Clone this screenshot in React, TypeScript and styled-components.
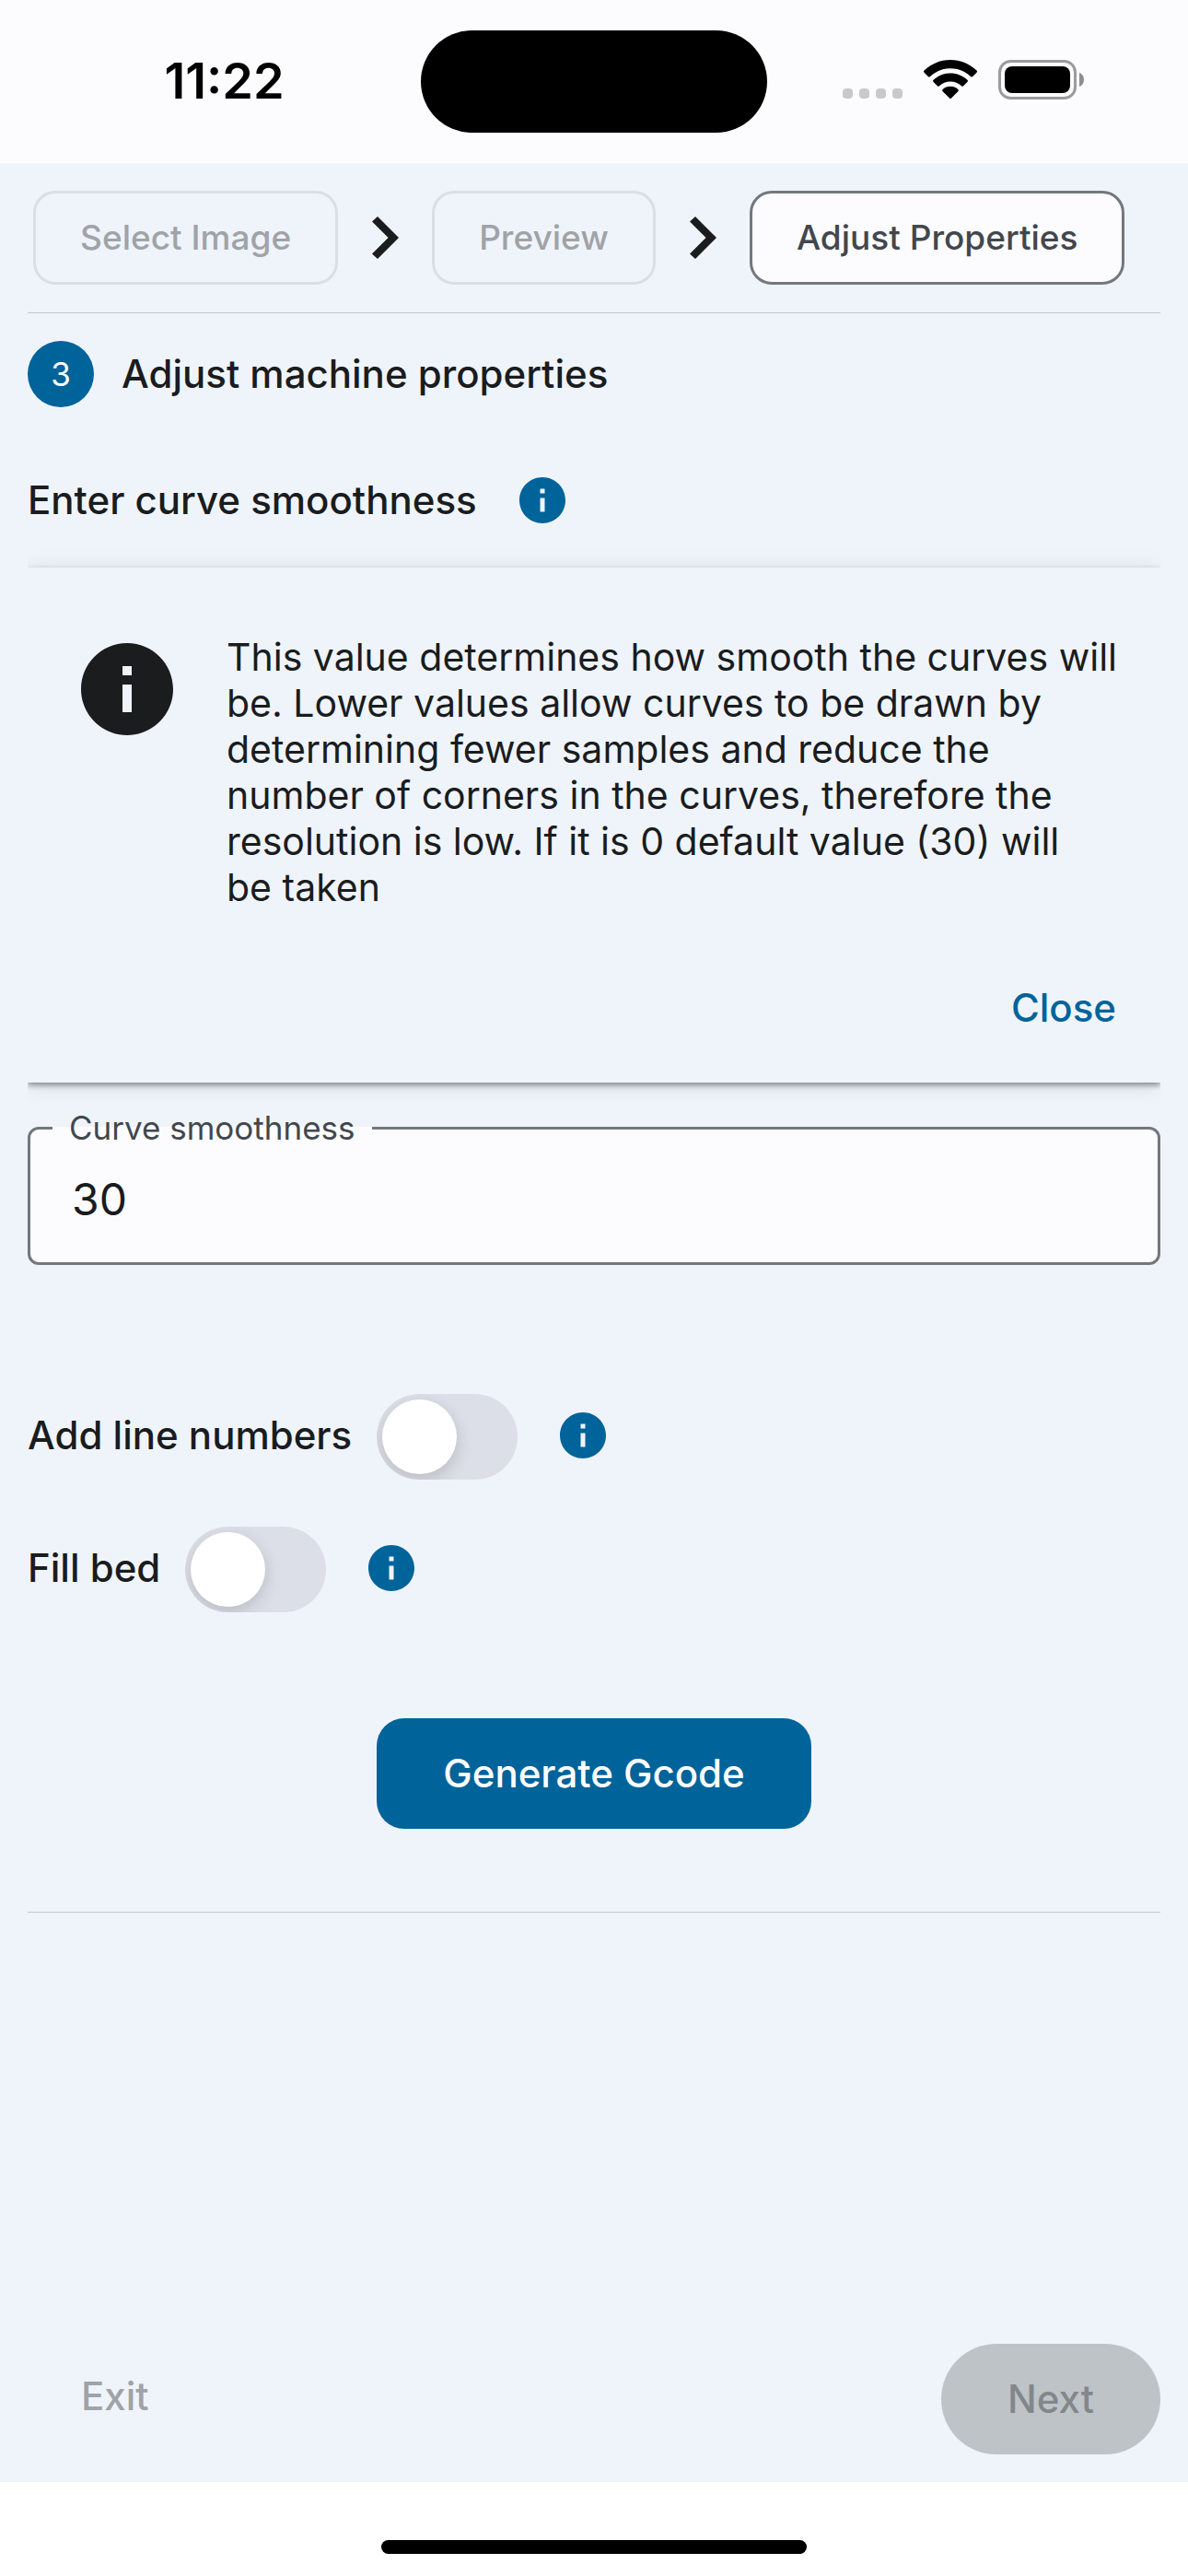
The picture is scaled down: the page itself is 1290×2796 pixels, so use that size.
import React, { useState } from "react";
import styled, { createGlobalStyle } from "styled-components";

const color = {
  surface: "#fcfcff",
  tint: "#eff4fb",
  ink: "#1a1c1e",
  inkSoft: "#42474e",
  outline: "#72787e",
  hairline: "#c2c7ce",
  primary: "#00639a",
  muted: "#a0a3a7",
};

const GlobalStyle = createGlobalStyle`
  *, *::before, *::after { box-sizing: border-box; }
  body { margin: 0; background: #ffffff; }
  button, input { font: inherit; color: inherit; }
`;

const Screen = styled.div`
  display: flex;
  flex-direction: column;
  min-height: 100vh;
  font-family: Inter, "Liberation Sans", sans-serif;
  font-size: 42px;
  line-height: 50px;
  color: ${color.ink};
  background: ${color.tint};
`;

const StatusBar = styled.header`
  display: grid;
  grid-template-columns: 1fr auto 1fr;
  align-items: center;
  justify-items: center;
  padding: 33px 30px;
  background: ${color.surface};
`;

const Clock = styled.time`
  padding-bottom: 2px;
  font-size: 54px;
  font-weight: 600;
  color: #000000;
`;

const Island = styled.div`
  width: 376px;
  height: 111px;
  border-radius: 56px;
  background: #000000;
`;

const StatusIcons = styled.div`
  display: flex;
  align-items: center;
  gap: 23px;
  padding-bottom: 4px;
`;

const Main = styled.main`
  display: flex;
  flex: 1;
  flex-direction: column;
  padding: 0 30px;
`;

const Steps = styled.nav`
  display: flex;
  align-items: center;
  gap: 36px;
  padding: 30px 6px;
  border-bottom: 1px solid ${color.hairline};
`;

const StepButton = styled.button`
  height: 102px;
  padding: 0 48px;
  border: 3px solid ${color.outline};
  border-radius: 24px;
  background: ${color.surface};
  color: ${color.inkSoft};
  font-size: 37px;
  font-weight: 500;
  white-space: nowrap;

  &:disabled {
    border-color: #dadfe5;
    background: transparent;
    color: ${color.muted};
  }
`;

const StepTitle = styled.div`
  display: flex;
  align-items: center;
  gap: 30px;
  padding: 30px 0;
`;

const StepNumber = styled.span`
  display: flex;
  align-items: center;
  justify-content: center;
  width: 72px;
  height: 72px;
  border-radius: 50%;
  background: ${color.primary};
  color: #ffffff;
  font-size: 35px;
`;

const Heading = styled.h1`
  margin: 0;
  font-size: 42px;
  font-weight: 500;
`;

const FieldHeading = styled.div`
  display: flex;
  align-items: center;
  gap: 41px;
  padding: 41px 0 43px;
  font-weight: 500;
`;

const IconButton = styled.button`
  display: flex;
  padding: 0;
  border: 0;
  background: none;
  color: ${color.primary};
`;

const BannerClip = styled.div`
  clip-path: inset(-24px 0);
`;

const Banner = styled.section`
  padding: 72px 40px 24px 48px;
  background: ${color.tint};
  box-shadow: 0 3px 6px rgba(0, 0, 0, 0.4), 0 3px 24px rgba(0, 0, 0, 0.1);
`;

const BannerBody = styled.div`
  display: flex;
  align-items: flex-start;
  gap: 48px;

  svg {
    flex: none;
  }

  p {
    margin: 0;
    font-size: 41px;
  }
`;

const BannerActions = styled.div`
  display: flex;
  justify-content: flex-end;
  padding: 49px 8px 0 0;
`;

const TextButton = styled.button`
  height: 114px;
  padding: 0;
  border: 0;
  background: none;
  color: ${color.primary};
  font-weight: 500;

  &:disabled {
    color: ${color.muted};
  }
`;

const Field = styled.fieldset`
  min-width: 0;
  margin: 28px 0 0;
  padding: 0;
  border: 3px solid ${color.outline};
  border-radius: 12px;
  background: ${color.surface};
`;

const FieldLabel = styled.legend`
  margin-left: 24px;
  padding: 0 18px;
  color: ${color.inkSoft};
  font-size: 35px;
  line-height: 42px;
`;

const FieldInput = styled.input`
  display: block;
  width: 100%;
  height: 125px;
  padding: 0 45px 12px;
  border: 0;
  outline: 0;
  background: none;
  font-size: 48px;
`;

const Switches = styled.div`
  display: flex;
  flex-direction: column;
  gap: 51px;
  padding: 140px 0 115px;
`;

const SwitchRow = styled.div`
  display: flex;
  align-items: center;
  font-weight: 500;

  label,
  button {
    margin-bottom: 3px;
  }

  label {
    margin-right: 27px;
  }

  button {
    margin-left: 41px;
  }
`;

const Switch = styled.input`
  width: 153px;
  height: 93px;
  margin: 0;
  padding: 6px;
  overflow: hidden;
  appearance: none;
  border-radius: 47px;
  background: #dcdfe7;

  &::before {
    content: "";
    display: block;
    width: 81px;
    height: 81px;
    border-radius: 50%;
    background: #ffffff;
    box-shadow: 0 6px 18px rgba(0, 0, 0, 0.16);
  }

  &:checked {
    background: ${color.primary};
  }

  &:checked::before {
    margin-left: 60px;
  }
`;

const Generate = styled.div`
  display: flex;
  justify-content: center;
  padding-bottom: 90px;
  border-bottom: 1px solid ${color.hairline};
`;

const FilledButton = styled.button<{ $radius: number }>`
  height: 120px;
  padding: 0 72px;
  border: 0;
  border-radius: ${(p) => p.$radius}px;
  background: ${color.primary};
  color: #ffffff;
  font-weight: 500;

  &:disabled {
    background: #bec3c7;
    color: #83878b;
  }
`;

const Footer = styled.footer`
  display: flex;
  align-items: flex-start;
  justify-content: space-between;
  margin-top: auto;
  padding: 30px 0 30px 58px;
`;

const HomeArea = styled.div`
  display: flex;
  justify-content: center;
  padding: 63px 0 24px;
  background: #ffffff;
`;

const HomeIndicator = styled.div`
  width: 462px;
  height: 15px;
  border-radius: 8px;
  background: #000000;
`;

const InfoIcon = ({ size }: { size: number }) => (
  <svg width={size} height={size} viewBox="0 0 24 24" fill="currentColor" aria-hidden="true">
    <path d="M12 2C6.480 2 2 6.480 2 12s4.480 10 10 10 10-4.480 10-10S17.520 2 12 2zm1 15h-2v-6h2v6zm0-8h-2V7h2v2z" />
  </svg>
);

const Chevron = () => (
  <svg width="30" height="46" viewBox="0 0 30 46" fill={color.ink} aria-hidden="true">
    <path d="M7 0 30 23 7 46 1 40.600 18.600 23 1 5.400z" />
  </svg>
);

const CellularIcon = () => (
  <svg width="65" height="43" viewBox="0 0 65 43" fill="#c9c9cb" aria-hidden="true">
    {[0, 18, 36, 54].map((x) => (
      <rect key={x} x={x} y="31" width="11" height="11" rx="4" />
    ))}
  </svg>
);

const WifiIcon = () => (
  <svg width="58" height="43" viewBox="0 0 58 43" fill="#000000" aria-hidden="true">
    <path d="M29 0C18 0 8 4.300.5 11.500a1.500 1.500 0 0 0 0 2.200L4.800 18a1.500 1.500 0 0 0 2.200 0C13 12.400 20.600 9.300 29 9.300S45 12.400 51 18a1.500 1.500 0 0 0 2.200 0l4.300-4.300a1.500 1.500 0 0 0 0-2.200C50 4.300 40 0 29 0z" />
    <path d="M29 14.500c-7 0-13.500 2.700-18.400 7.200a1.500 1.500 0 0 0 0 2.200l4.300 4.300a1.500 1.500 0 0 0 2.100 0c3.200-2.900 7.400-4.700 12-4.700s8.800 1.800 12 4.700a1.500 1.500 0 0 0 2.100 0l4.300-4.300a1.500 1.500 0 0 0 0-2.200C42.500 17.200 36 14.500 29 14.500z" />
    <path d="M29 28.800c-3.200 0-6.100 1.200-8.300 3.200a1.500 1.500 0 0 0 0 2.200l7.300 7.300a1.400 1.400 0 0 0 2 0l7.300-7.300a1.500 1.500 0 0 0 0-2.200c-2.200-2-5.100-3.200-8.300-3.200z" />
  </svg>
);

const BatteryIcon = () => (
  <svg width="94" height="43" viewBox="0 0 94 43" aria-hidden="true">
    <rect x="1.500" y="1.500" width="82" height="40" rx="12" fill="none" stroke="#9b9b9d" strokeWidth="3" />
    <rect x="7" y="7" width="71" height="29" rx="8" fill="#000000" />
    <path d="M88 14c3 1 5 4 5 7.500S91 28 88 29z" fill="#8e8e90" />
  </svg>
);

const SwitchField = ({ id, label }: { id: string; label: string }) => {
  const [on, setOn] = useState(false);
  return (
    <SwitchRow>
      <label htmlFor={id}>{label}</label>
      <Switch id={id} type="checkbox" role="switch" checked={on} onChange={() => setOn(!on)} />
      <IconButton type="button" aria-label={`About: ${label}`}>
        <InfoIcon size={60} />
      </IconButton>
    </SwitchRow>
  );
};

export default function App() {
  const [smoothness, setSmoothness] = useState("30");
  const [showInfo, setShowInfo] = useState(true);

  return (
    <Screen>
      <GlobalStyle />
      <StatusBar>
        <Clock>11:22</Clock>
        <Island />
        <StatusIcons>
          <CellularIcon />
          <WifiIcon />
          <BatteryIcon />
        </StatusIcons>
      </StatusBar>

      <Main>
        <Steps aria-label="Steps">
          <StepButton type="button" disabled>Select Image</StepButton>
          <Chevron />
          <StepButton type="button" disabled>Preview</StepButton>
          <Chevron />
          <StepButton type="button" aria-current="step">Adjust Properties</StepButton>
        </Steps>

        <StepTitle>
          <StepNumber>3</StepNumber>
          <Heading>Adjust machine properties</Heading>
        </StepTitle>

        <FieldHeading>
          <span>Enter curve smoothness</span>
          <IconButton type="button" aria-label="About: Curve smoothness" onClick={() => setShowInfo(true)}>
            <InfoIcon size={60} />
          </IconButton>
        </FieldHeading>

        {showInfo && (
          <BannerClip>
            <Banner>
              <BannerBody>
                <InfoIcon size={120} />
                <p>
                  This value determines how smooth the curves will be. Lower values allow curves to be drawn by
                  determining fewer samples and reduce the number of corners in the curves, therefore the
                  resolution is low. If it is 0 default value (30) will
                  <br />
                  be taken
                </p>
              </BannerBody>
              <BannerActions>
                <TextButton type="button" onClick={() => setShowInfo(false)}>Close</TextButton>
              </BannerActions>
            </Banner>
          </BannerClip>
        )}

        <Field>
          <FieldLabel>
            <label htmlFor="smoothness">Curve smoothness</label>
          </FieldLabel>
          <FieldInput
            id="smoothness"
            inputMode="numeric"
            value={smoothness}
            onChange={(e) => setSmoothness(e.target.value)}
          />
        </Field>

        <Switches>
          <SwitchField id="line-numbers" label="Add line numbers" />
          <SwitchField id="fill-bed" label="Fill bed" />
        </Switches>

        <Generate>
          <FilledButton type="button" $radius={30}>Generate Gcode</FilledButton>
        </Generate>

        <Footer>
          <TextButton type="button" disabled>Exit</TextButton>
          <FilledButton type="button" $radius={60} disabled>Next</FilledButton>
        </Footer>
      </Main>

      <HomeArea>
        <HomeIndicator />
      </HomeArea>
    </Screen>
  );
}
